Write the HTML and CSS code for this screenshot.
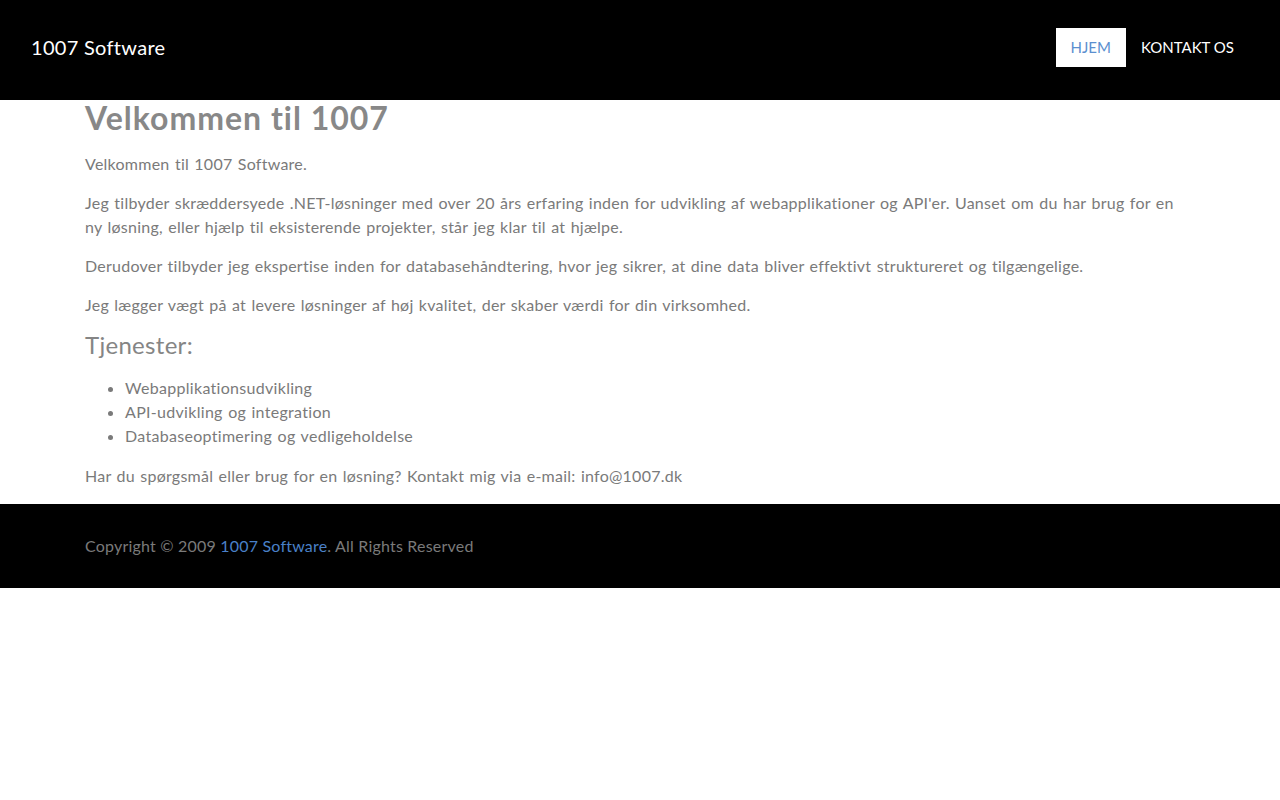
FILE: index.html
```html
<!DOCTYPE html>
<html lang="da">
<head>
<meta charset="utf-8">
<title>1007 Software</title>
<link rel="stylesheet" href="styles.css">
</head>
<body>
<header class="navbar">
  <a class="brand" href="#">1007 Software</a>
  <nav class="nav">
    <a class="nav-link active" href="#">HJEM</a>
    <a class="nav-link" href="#">KONTAKT OS</a>
  </nav>
</header>
<main class="container">
  <h1 class="title">Velkommen til 1007</h1>
  <p>Velkommen til 1007 Software.</p>
  <p>Jeg tilbyder skræddersyede .NET-løsninger med over 20 års erfaring inden for udvikling af webapplikationer og API'er. Uanset om du har brug for en ny løsning, eller hjælp til eksisterende projekter, står jeg klar til at hjælpe.</p>
  <p>Derudover tilbyder jeg ekspertise inden for databasehåndtering, hvor jeg sikrer, at dine data bliver effektivt struktureret og tilgængelige.</p>
  <p>Jeg lægger vægt på at levere løsninger af høj kvalitet, der skaber værdi for din virksomhed.</p>
  <h3 class="subtitle">Tjenester:</h3>
  <ul class="list">
    <li>Webapplikationsudvikling</li>
    <li>API-udvikling og integration</li>
    <li>Databaseoptimering og vedligeholdelse</li>
  </ul>
  <p>Har du spørgsmål eller brug for en løsning? Kontakt mig via e-mail: info@1007.dk</p>
</main>
<footer class="footer">
  <div class="container">
    <p class="copy">Copyright © 2009 <a href="#">1007 Software</a>. All Rights Reserved</p>
  </div>
</footer>
</body>
</html>
```

FILE: styles.css
```css
html, body {
  margin: 0;
  padding: 0;
  background: #fff;
}
body {
  font-family: Lato, "Open Sans", sans-serif;
  font-size: 16px;
  line-height: 24px;
  color: #7a7a7a;
}
.navbar {
  background: #000;
  height: 100px;
  display: flex;
  align-items: center;
  justify-content: space-between;
  padding: 0 31px 6px;
  box-sizing: border-box;
}
.brand {
  color: #fff;
  text-decoration: none;
  font-size: 20px;
  letter-spacing: 0.3px;
}
.nav {
  display: flex;
  margin-top: 1px;
}
.nav-link {
  display: block;
  color: #fff;
  text-decoration: none;
  font-size: 15px;
  line-height: 39px;
  padding: 0 15px;
}
.nav-link.active {
  background: #fff;
  color: #5b8fcf;
}
.container {
  width: 1110px;
  margin: 0 auto;
}
.title {
  margin: 0 0 17px;
  font-size: 32px;
  line-height: 35px;
  font-weight: 700;
  letter-spacing: 1px;
  color: #888;
}
p {
  margin: 0 0 15px;
  letter-spacing: 0.25px;
  word-spacing: 1px;
}
.subtitle {
  margin: 0 0 18px;
  font-size: 24px;
  line-height: 26px;
  font-weight: 400;
  letter-spacing: 0.3px;
  color: #858585;
}
.list {
  margin: 0 0 16px;
  padding-left: 40px;
  letter-spacing: 0.3px;
  word-spacing: 1px;
}
main.container > p:last-child {
  margin-bottom: 16px;
}
.footer {
  background: #000;
  padding: 30px 0;
}
.footer .copy {
  margin: 0;
  color: #7a7a7a;
  letter-spacing: 0.2px;
  word-spacing: 0;
}
.footer a {
  color: #4a80c8;
  text-decoration: none;
}
```
